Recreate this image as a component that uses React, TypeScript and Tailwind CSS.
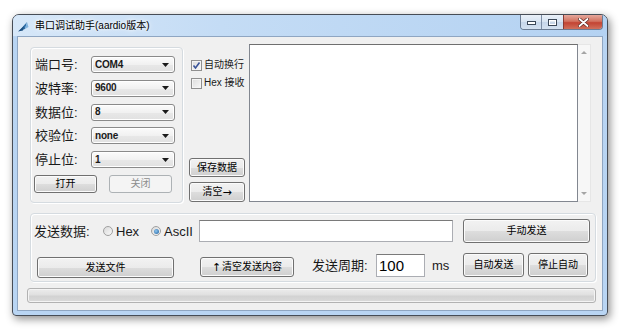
import React from "react";

const BTN =
  "flex items-center justify-center rounded-[3px] border border-[#707070] bg-[linear-gradient(#f2f2f2_0%,#ebebeb_50%,#dddddd_51%,#cfcfcf_100%)] shadow-[inset_0_0_0_1px_#fbfbfb] text-[10px] leading-none text-black";

function Combo({ value }: { value: string }) {
  return (
    <div className="w-[84px] h-[17px] flex items-center rounded-[3px] border border-[#8a8a8a] bg-[linear-gradient(#fbfbfb_0%,#f1f1f1_50%,#e8e8e8_51%,#e1e1e1_100%)] shadow-[inset_0_0_0_1px_#ffffff]">
      <span className="ml-[3px] flex-1 text-[10px] leading-none font-bold text-[#1a1a1a] font-['Liberation_Sans',sans-serif] tracking-[-0.2px]">
        {value}
      </span>
      <svg width="7" height="4" viewBox="0 0 7 4" className="mr-[5px]">
        <path d="M0 0h7L3.5 4z" fill="#1a1a1a" />
      </svg>
    </div>
  );
}

function Row({ label, value }: { label: string; value: string }) {
  return (
    <div className="flex items-center h-[17px]">
      <span className="ml-[4px] w-[56px] text-[13px] leading-none text-[#1a1a1a]">{label}</span>
      <Combo value={value} />
    </div>
  );
}

function Check({ checked, label }: { checked: boolean; label: string }) {
  return (
    <div className="flex items-center h-[14px]">
      <div className="ml-[2px] w-[11px] h-[11px] border border-[#8f8f8f] bg-[linear-gradient(135deg,#dcdcdc,#f8f8f8)] shadow-[inset_0_0_0_1px_#f4f4f4] flex items-center justify-center">
        {checked && (
          <svg width="9" height="9" viewBox="0 0 9 9">
            <path d="M1.5 4.5L3.5 7L7.5 1.5" stroke="#3a5499" strokeWidth="1.6" fill="none" />
          </svg>
        )}
      </div>
      <span className="ml-[2px] text-[10px] leading-none text-[#1a1a1a] whitespace-nowrap">{label}</span>
    </div>
  );
}

function Radio({ checked }: { checked: boolean }) {
  return (
    <div className="w-[10px] h-[10px] rounded-full border border-[#a0a0a0] bg-[linear-gradient(135deg,#dadada,#f8f8f8)] flex items-center justify-center">
      {checked && (
        <div className="w-[5px] h-[5px] rounded-full bg-[radial-gradient(circle_at_40%_40%,#8ec6f0,#1f5e9c)]" />
      )}
    </div>
  );
}

export default function App() {
  return (
    <div className="w-[619px] h-[332px] bg-white overflow-hidden font-['Liberation_Sans','Noto_Sans_CJK_SC',sans-serif]">
      <div className="ml-[12px] mt-[14px] w-[596px] h-[302px] rounded-t-[7px] rounded-b-[4px] border border-[#474d56] bg-[linear-gradient(180deg,#c3dbf4_0px,#b8d4f2_22px,#b9d5f3_100%)] shadow-[2px_3px_9px_rgba(0,0,0,0.45)] flex flex-col overflow-hidden">
        {/* title bar */}
        <div className="h-[21px] flex items-start bg-[linear-gradient(90deg,#d6e7f8_0%,#c4dcf5_35%,#b4d2f2_100%)]">
          <svg width="11" height="11" viewBox="0 0 11 11" className="ml-[5px] mt-[6px]">
            <path d="M1 10 L9 1 L7 8 Z" fill="#2f6fa8" />
            <path d="M0 10.5 L6 5 L5 9.5 Z" fill="#1c4f80" />
            <path d="M9 1 L10.5 6 L7 8 Z" fill="#7fb2de" />
          </svg>
          <span className="ml-[6px] mt-[5px] text-[10px] leading-[12px] text-black whitespace-nowrap [text-shadow:0_0_6px_#ffffff,0_0_3px_#ffffff]">
            串口调试助手(aardio版本)
          </span>
          <div className="flex-1" />
          <div className="mr-[4px] flex h-[15px] rounded-b-[4px] border border-t-0 border-[#6b7c93] overflow-hidden">
            <div className="w-[21px] h-full flex items-end justify-center pb-[4px] bg-[linear-gradient(#e9f0f8_0%,#d7e3f1_50%,#c6d6ea_51%,#d4e1f0_100%)] border-r border-[#7d8ea5]">
              <svg width="9" height="4" viewBox="0 0 9 4">
                <rect x="0.5" y="0.5" width="8" height="3" fill="#ffffff" stroke="#3b4757" />
              </svg>
            </div>
            <div className="w-[22px] h-full flex items-center justify-center bg-[linear-gradient(#e9f0f8_0%,#d7e3f1_50%,#c6d6ea_51%,#d4e1f0_100%)] border-r border-[#8a3a33]">
              <svg width="9" height="7" viewBox="0 0 9 7">
                <rect x="0.5" y="0.5" width="8" height="6" fill="#ffffff" stroke="#3b4757" />
                <rect x="2" y="2.5" width="5" height="2.5" fill="#c9d7e8" />
              </svg>
            </div>
            <div className="w-[38px] h-full flex items-center justify-center bg-[linear-gradient(#e5a79c_0%,#d2725f_45%,#c34433_55%,#d0705c_100%)]">
              <svg width="11" height="9" viewBox="0 0 11 9">
                <path d="M1.5 1 L9.5 8 M9.5 1 L1.5 8" stroke="#5a2620" strokeWidth="3.2" strokeLinecap="round" />
                <path d="M1.5 1 L9.5 8 M9.5 1 L1.5 8" stroke="#ffffff" strokeWidth="1.8" strokeLinecap="round" />
              </svg>
            </div>
          </div>
        </div>

        {/* client area */}
        <div className="mx-[4px] w-[586px] h-[275px] border border-[#8fa6c2] bg-[#f0f0f0] flex flex-col">
          {/* top row */}
          <div className="flex items-start h-[166px]">
            <div className="ml-[12px] mt-[10px] w-[153px] h-[156px] rounded-[4px] border border-[#d5dbe0] shadow-[inset_1px_1px_0_#ffffff,1px_1px_0_#ffffff] flex flex-col">
              <div className="mt-[8px] flex flex-col gap-[6.75px]">
                <Row label="端口号:" value="COM4" />
                <Row label="波特率:" value="9600" />
                <Row label="数据位:" value="8" />
                <Row label="校验位:" value="none" />
                <Row label="停止位:" value="1" />
              </div>
              <div className="mt-[7px] flex">
                <div className={`${BTN} ml-[3px] w-[63px] h-[18px]`}>打开</div>
                <div className="ml-[12px] w-[63px] h-[18px] flex items-center justify-center rounded-[3px] border border-[#adb2b5] bg-[#f4f4f4] text-[10px] leading-none text-[#8d8d8d]">
                  关闭
                </div>
              </div>
            </div>

            <div className="ml-[6px] mt-[7px] w-[56px] h-[158px] flex flex-col">
              <div className="mt-[14px]">
                <Check checked label="自动换行" />
              </div>
              <div className="mt-[4px]">
                <Check checked={false} label="Hex 接收" />
              </div>
              <div className="mt-auto flex flex-col">
                <div className={`${BTN} w-[56px] h-[19px]`}>保存数据</div>
                <div className={`${BTN} mt-[5px] w-[56px] h-[20px]`}>
                  清空<span className="text-[11px] font-['DejaVu_Sans',sans-serif]">→</span>
                </div>
              </div>
            </div>

            <div className="ml-[4px] mt-[7px] w-[329px] h-[158px] bg-white border border-[#828790] border-t-[#6f6f6f]" />
            <div className="mt-[7px] w-[13px] h-[158px] bg-[#f7f7f7] border border-l-0 border-[#e6e6e6] flex flex-col items-center justify-between py-[6px]">
              <svg width="6" height="3" viewBox="0 0 6 3">
                <path d="M0 3h6L3 0z" fill="#a5a5a5" />
              </svg>
              <svg width="6" height="3" viewBox="0 0 6 3">
                <path d="M0 0h6L3 3z" fill="#a5a5a5" />
              </svg>
            </div>
          </div>

          {/* send group */}
          <div className="ml-[12px] mt-[10px] w-[566px] h-[69px] rounded-[4px] border border-[#d5dbe0] shadow-[inset_1px_1px_0_#ffffff,1px_1px_0_#ffffff] flex flex-col">
            <div className="mt-[5px] h-[24px] flex items-center">
              <span className="ml-[3px] w-[69px] text-[13px] leading-none text-[#1a1a1a] whitespace-nowrap">发送数据:</span>
              <Radio checked={false} />
              <span className="ml-[3px] w-[35px] text-[13px] leading-none text-[#1a1a1a]">Hex</span>
              <Radio checked />
              <span className="ml-[3px] w-[35px] text-[13px] leading-none text-[#1a1a1a]">AscII</span>
              <div className="w-[254px] h-[22px] bg-white border border-[#abadb3] border-t-[#7a7a7a]" />
              <div className={`${BTN} ml-[10px] w-[127px] h-[24px]`}>手动发送</div>
            </div>
            <div className="mt-[10px] h-[25px] flex items-end">
              <div className={`${BTN} ml-[6px] w-[137px] h-[21px]`}>发送文件</div>
              <div className={`${BTN} ml-[26px] mb-[1px] w-[94px] h-[20px]`}>
                <span className="text-[11px] font-['DejaVu_Sans',sans-serif] mr-[1px]">↑</span>清空发送内容
              </div>
              <span className="ml-[18px] w-[64px] self-center text-[13px] leading-none text-[#1a1a1a] whitespace-nowrap">发送周期:</span>
              <div className="w-[49px] h-[23px] mb-[1px] bg-white border border-[#abadb3] border-t-[#7a7a7a] flex items-center">
                <span className="ml-[2px] text-[15px] leading-none text-black">100</span>
              </div>
              <span className="ml-[7px] w-[31px] self-center text-[13px] leading-none text-[#1a1a1a]">ms</span>
              <div className={`${BTN} mb-[1px] w-[61px] h-[24px]`}>自动发送</div>
              <div className={`${BTN} ml-[4px] mb-[1px] w-[60px] h-[24px]`}>停止自动</div>
            </div>
          </div>

          {/* progress bar */}
          <div className="ml-[9px] mt-[6px] w-[569px] h-[15px] rounded-[3px] border border-[#b2b2b2] bg-[linear-gradient(#ececec_0%,#e0e0e0_45%,#d2d2d2_55%,#dadada_100%)] shadow-[inset_0_0_0_1px_#f4f4f4]" />
        </div>
      </div>
    </div>
  );
}
